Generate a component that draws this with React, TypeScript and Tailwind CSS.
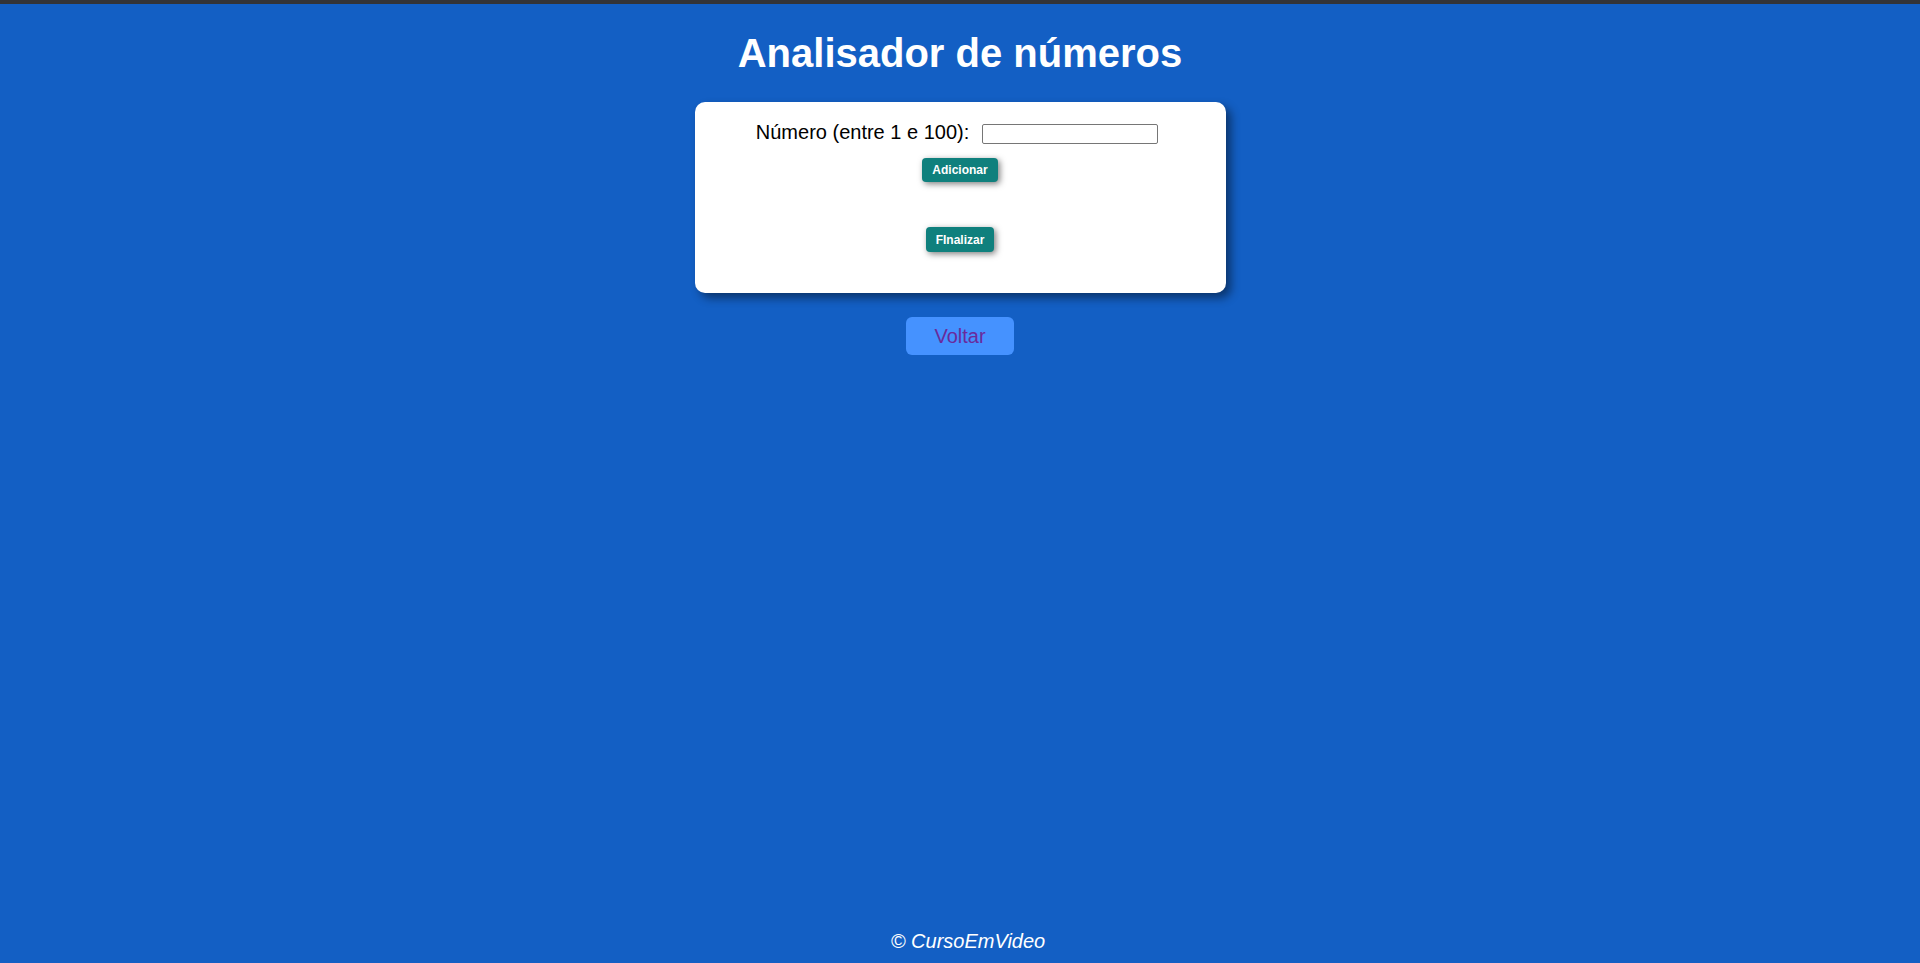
export default function App() {
  return (
    <div
      className="h-screen flex flex-col bg-[#135fc4] overflow-hidden"
      style={{ fontFamily: '"Liberation Sans", Arial, sans-serif' }}
    >
      {/* top strip */}
      <div className="h-[4px] bg-[#333438] shrink-0" />

      <main className="flex-1 flex flex-col items-center pt-[26px]">
        <h1 className="text-[40px] leading-[46px] font-bold text-white mb-[26px]">
          Analisador de números
        </h1>

        {/* card */}
        <div className="w-[531px] h-[191px] bg-white rounded-[10px] shadow-[5px_5px_10px_rgba(0,0,0,0.45)] flex flex-col items-center pt-[18px]">
          <div className="flex items-center justify-center h-[24px] pr-[6px]">
            <label className="text-[20px] leading-[23px] text-black">
              Número (entre 1 e 100):
            </label>
            <input
              type="number"
              className="ml-[13px] mt-[4px] w-[176px] h-[20px] border border-[#767676] rounded-[2px] bg-white text-[13px] px-[2px] outline-none [appearance:textfield]"
            />
          </div>
          <button className="mt-[14px] h-[24px] px-[10px] bg-[#0f807d] text-white text-[12px] font-bold rounded-[4px] shadow-[2px_2px_6px_rgba(0,0,0,0.5)]">
            Adicionar
          </button>
          <button className="mt-[45px] h-[25px] px-[10px] bg-[#0f807d] text-white text-[12px] font-bold rounded-[4px] shadow-[2px_2px_6px_rgba(0,0,0,0.5)]">
            FInalizar
          </button>
        </div>

        <button className="mt-[24px] h-[38px] px-[28px] bg-[#4592ff] text-[#6a2a9c] text-[20px] rounded-[6px]">
          Voltar
        </button>
      </main>

      <footer className="pb-[10px] pl-[16px] text-center text-white italic text-[20px] leading-[23px]">
        © CursoEmVideo
      </footer>
    </div>
  );
}
